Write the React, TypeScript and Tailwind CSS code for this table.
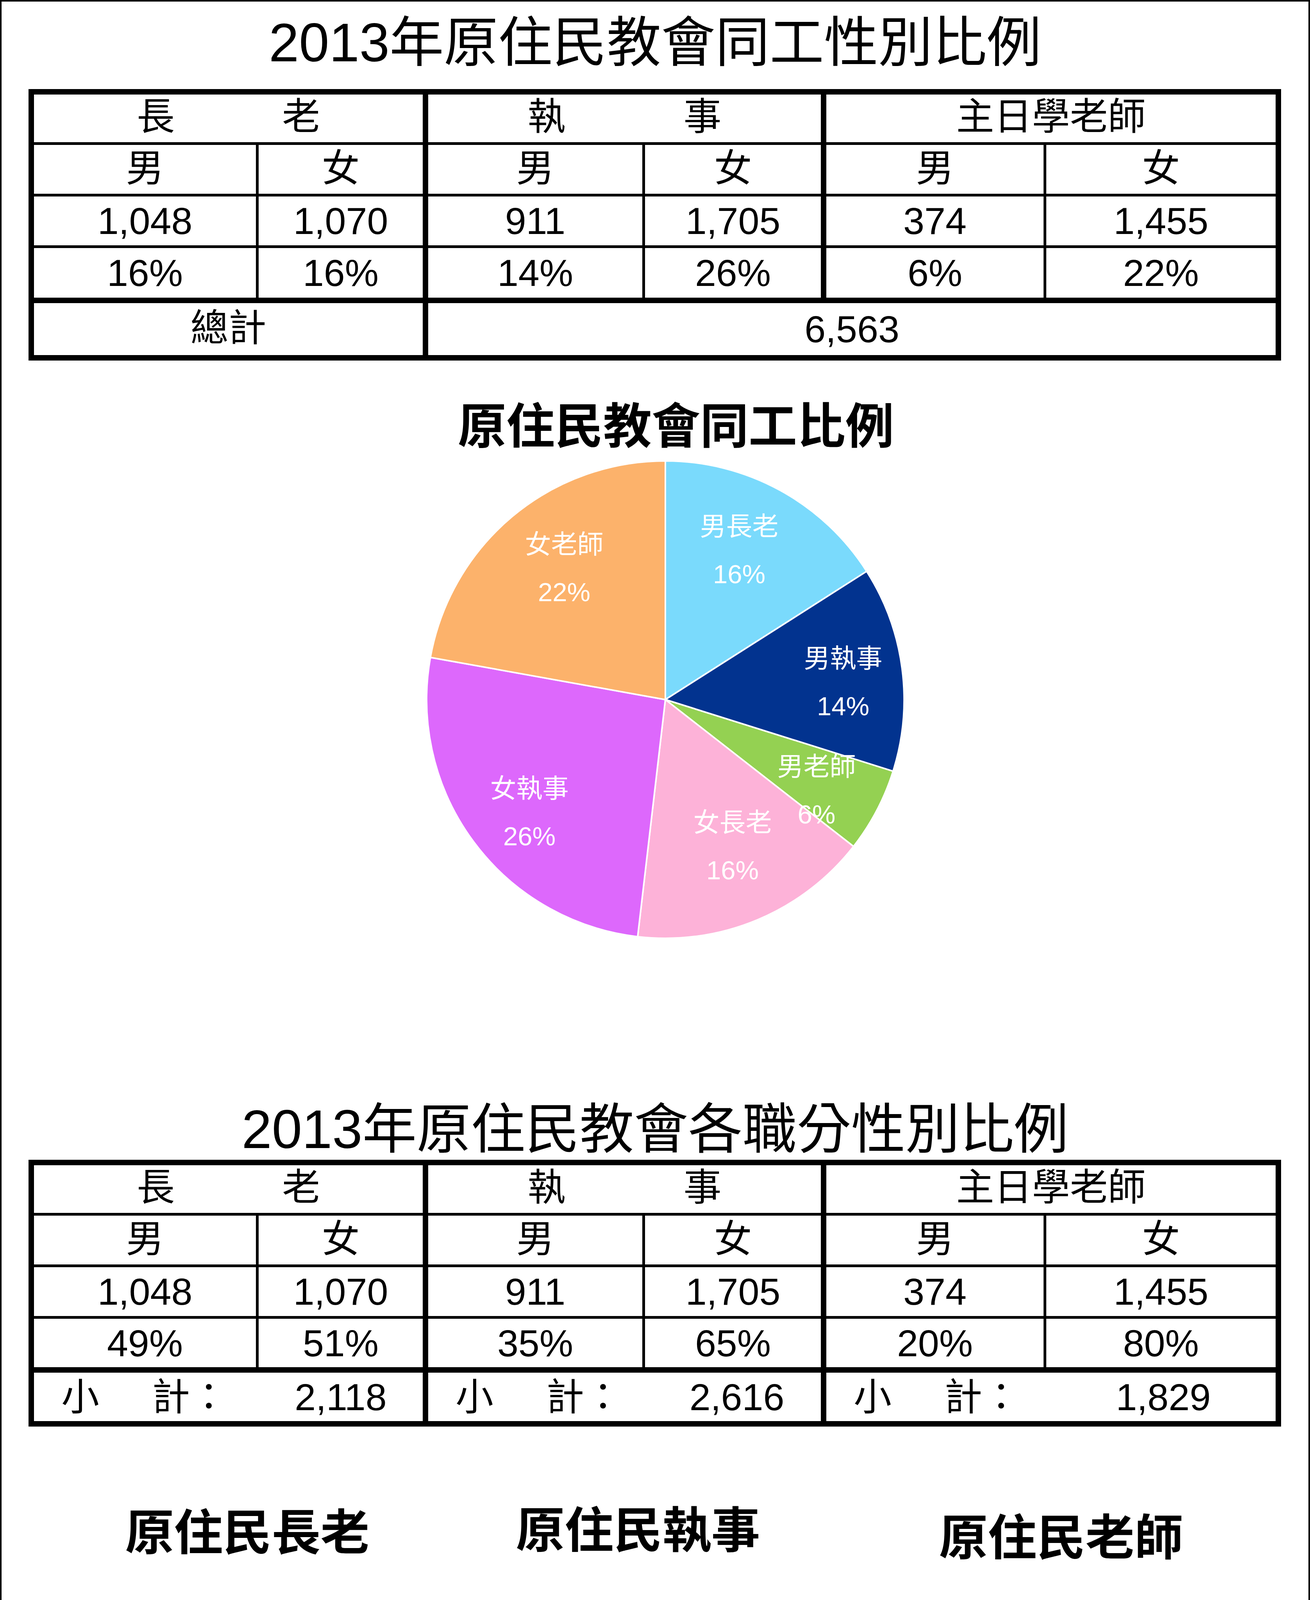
import React from 'react'

// cell widths include their right border (border-box)
const COLS = [575, 434, 555, 464, 563, 587]
const COL_BORDER = ['border-r-[7px]', 'border-r-[14px]', 'border-r-[7px]', 'border-r-[14px]', 'border-r-[7px]', '']
const GROUP_W = [1009, 1019, 1150]

const C = {
    blue: '#7ADAFC',
    navy: '#02338F',
    green: '#94D152',
    pink: '#FDB2D8',
    magenta: '#DD68FC',
    orange: '#FCB26B',
}

type Slice = { value: number; color: string }
type Label = { x: number; y: number; name: string; pct: string }

function slicePath(cx: number, cy: number, r: number, a0: number, a1: number) {
    const rad = (a: number) => (a * Math.PI) / 180
    const x0 = cx + r * Math.sin(rad(a0))
    const y0 = cy - r * Math.cos(rad(a0))
    const x1 = cx + r * Math.sin(rad(a1))
    const y1 = cy - r * Math.cos(rad(a1))
    const large = a1 - a0 > 180 ? 1 : 0
    return `M ${cx} ${cy} L ${x0} ${y0} A ${r} ${r} 0 ${large} 1 ${x1} ${y1} Z`
}

function Pie({ cx, cy, r, start, slices, labels, width, height }: {
    cx: number; cy: number; r: number; start: number; slices: Slice[]; labels: Label[]; width: number; height: number
}) {
    const total = slices.reduce((s, x) => s + x.value, 0)
    let acc = start
    return (
        <svg width={width} height={height} className="block">
            {slices.map((s, i) => {
                const a0 = acc
                const a1 = acc + (s.value / total) * 360
                acc = a1
                return <path key={i} d={slicePath(cx, cy, r, a0, a1)} fill={s.color} stroke="#ffffff" strokeWidth={4} strokeLinejoin="round" />
            })}
            {labels.map((l, i) => (
                <g key={i} fill="#ffffff" fontSize={67} textAnchor="middle" dominantBaseline="central">
                    <text x={l.x} y={l.y}>{l.name}</text>
                    <text x={l.x} y={l.y + 122}>{l.pct}</text>
                </g>
            ))}
        </svg>
    )
}

function Row({ h, border, children }: { h: string; border: string; children: React.ReactNode }) {
    return <div className={`flex ${h} ${border} border-black`}>{children}</div>
}

function Cell({ i, children }: { i: number; children: React.ReactNode }) {
    return (
        <div className={`flex items-center justify-center border-black ${COL_BORDER[i]}`} style={{ width: COLS[i] }}>
            {children}
        </div>
    )
}

function HeaderRow({ h }: { h: string }) {
    return (
        <Row h={h} border="border-b-[7px]">
            <div className="flex items-center justify-center gap-[275px] border-r-[14px] border-black pb-[10px]" style={{ width: GROUP_W[0] }}>
                <span>長</span><span>老</span>
            </div>
            <div className="flex items-center justify-center gap-[302px] border-r-[14px] border-black pb-[10px]" style={{ width: GROUP_W[1] }}>
                <span>執</span><span>事</span>
            </div>
            <div className="flex items-center justify-center pb-[10px]" style={{ width: GROUP_W[2] }}>
                主日學老師
            </div>
        </Row>
    )
}

function GenderRow() {
    return (
        <Row h="h-[132px]" border="border-b-[7px]">
            {['男', '女', '男', '女', '男', '女'].map((g, i) => (
                <Cell key={i} i={i}><span className="pb-[6px]">{g}</span></Cell>
            ))}
        </Row>
    )
}

function ValueRow({ values, h, border }: { values: string[]; h: string; border: string }) {
    return (
        <Row h={h} border={border}>
            {values.map((v, i) => (
                <Cell key={i} i={i}>{v}</Cell>
            ))}
        </Row>
    )
}

function SubtotalGroup({ w, border, value }: { w: number; border: string; value: string }) {
    return (
        <div className={`flex items-center ${border} border-black`} style={{ width: w }}>
            <div className="flex items-center pl-[70px]" style={{ width: 575 }}>
                <span>小</span>
                <span className="ml-[135px]">計：</span>
            </div>
            <div className="flex flex-1 items-center justify-center">{value}</div>
        </div>
    )
}

export default function App() {
    const counts = ['1,048', '1,070', '911', '1,705', '374', '1,455']

    return (
        <div className="w-[3353px] h-[4938px] overflow-hidden border-4 border-black bg-white text-black font-['Liberation_Sans','Noto_Sans_CJK_TC',sans-serif]">
            <div className="mt-[4px] flex h-[200px] items-center justify-center text-[139px] leading-none">
                2013年原住民教會同工性別比例
            </div>

            <div className="ml-[69px] mt-[20px] w-[3206px] border-[14px] border-black text-[97px] leading-none">
                <HeaderRow h="h-[129px]" />
                <GenderRow />
                <ValueRow values={counts} h="h-[132px]" border="border-b-[7px]" />
                <ValueRow values={['16%', '16%', '14%', '26%', '6%', '22%']} h="h-[141px]" border="border-b-[14px]" />
                <Row h="h-[133px]" border="">
                    <div className="flex items-center justify-center border-r-[14px] border-black pb-[6px]" style={{ width: GROUP_W[0] }}>
                        總計
                    </div>
                    <div className="flex flex-1 items-center justify-center">6,563</div>
                </Row>
            </div>

            {/* chart title sits over the pie, a little right of the page centre */}
            <div className="mt-[94px] flex h-[150px] items-center justify-center pl-[107px] text-[124px] font-bold leading-none">
                原住民教會同工比例
            </div>
            <Pie
                width={3345}
                height={1260}
                cx={1699}
                cy={624}
                r={611}
                start={0}
                slices={[
                    { value: 1048, color: C.blue },
                    { value: 911, color: C.navy },
                    { value: 374, color: C.green },
                    { value: 1070, color: C.pink },
                    { value: 1705, color: C.magenta },
                    { value: 1455, color: C.orange },
                ]}
                labels={[
                    { x: 1888, y: 180, name: '男長老', pct: '16%' },
                    { x: 2154, y: 518, name: '男執事', pct: '14%' },
                    { x: 2086, y: 795, name: '男老師', pct: '6%' },
                    { x: 1871, y: 938, name: '女長老', pct: '16%' },
                    { x: 1351, y: 851, name: '女執事', pct: '26%' },
                    { x: 1440, y: 226, name: '女老師', pct: '22%' },
                ]}
            />

            <div className="mt-[384px] flex h-[158px] items-center justify-center text-[139px] leading-none">
                2013年原住民教會各職分性別比例
            </div>

            <div className="ml-[69px] w-[3206px] border-[14px] border-black text-[97px] leading-none">
                <HeaderRow h="h-[129px]" />
                <GenderRow />
                <ValueRow values={counts} h="h-[132px]" border="border-b-[7px]" />
                <ValueRow values={['49%', '51%', '35%', '65%', '20%', '80%']} h="h-[138px]" border="border-b-[14px]" />
                <Row h="h-[124px]" border="">
                    <SubtotalGroup w={GROUP_W[0]} border="border-r-[14px]" value="2,118" />
                    <SubtotalGroup w={GROUP_W[1]} border="border-r-[14px]" value="2,616" />
                    <SubtotalGroup w={GROUP_W[2]} border="" value="1,829" />
                </Row>
            </div>

            <div className="flex items-start pl-[129px]">
                <div className="mt-[192px] w-[1000px]">
                    <div className="flex h-[160px] items-center justify-center text-[125px] font-bold leading-none">原住民長老</div>
                    <Pie
                        width={1000}
                        height={900}
                        cx={489}
                        cy={490}
                        r={381}
                        start={2}
                        slices={[
                            { value: 1070, color: C.pink },
                            { value: 1048, color: C.blue },
                        ]}
                        labels={[
                            { x: 321, y: 429, name: '男', pct: '49%' },
                            { x: 680, y: 431, name: '女', pct: '51%' },
                        ]}
                    />
                </div>
                <div className="mt-[186px] w-[1000px]">
                    <div className="flex h-[160px] items-center justify-center text-[125px] font-bold leading-none">原住民執事</div>
                    <Pie
                        width={1000}
                        height={900}
                        cx={486}
                        cy={488}
                        r={382}
                        start={0}
                        slices={[
                            { value: 1705, color: C.magenta },
                            { value: 911, color: C.navy },
                        ]}
                        labels={[
                            { x: 319, y: 340, name: '男', pct: '35%' },
                            { x: 676, y: 423, name: '女', pct: '65%' },
                        ]}
                    />
                </div>
                <div className="ml-[83px] mt-[205px] w-[1000px]">
                    <div className="flex h-[160px] items-center justify-center text-[125px] font-bold leading-none">原住民老師</div>
                    <Pie
                        width={1000}
                        height={900}
                        cx={482}
                        cy={488}
                        r={382}
                        start={0}
                        slices={[
                            { value: 1455, color: C.orange },
                            { value: 374, color: C.green },
                        ]}
                        labels={[
                            { x: 334, y: 244, name: '男', pct: '20%' },
                            { x: 634, y: 449, name: '女', pct: '80%' },
                        ]}
                    />
                </div>
            </div>
        </div>
    )
}
